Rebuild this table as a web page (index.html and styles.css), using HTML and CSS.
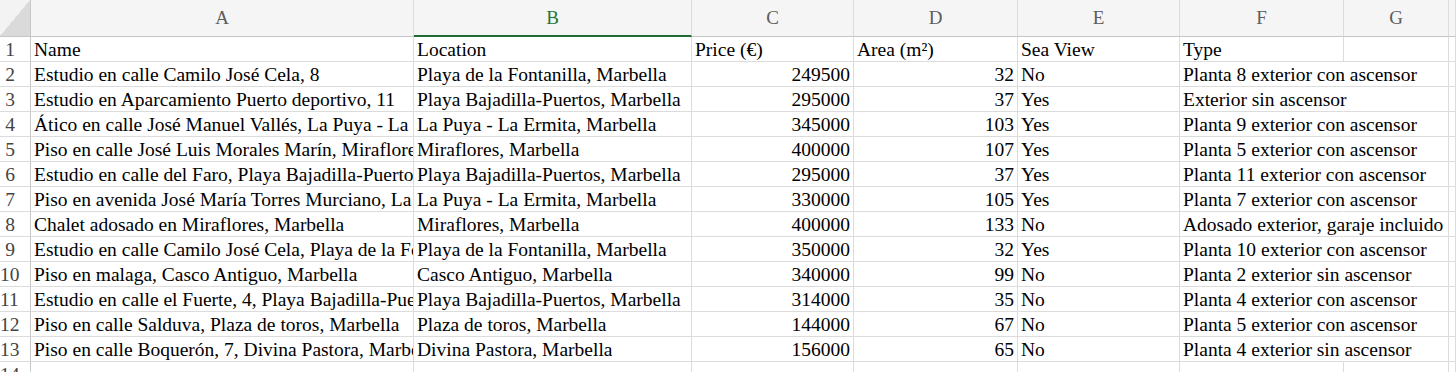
FILE: index.html
```html
<!DOCTYPE html>
<html lang="es">
<head>
<meta charset="utf-8">
<title>Sheet</title>
<link rel="stylesheet" href="styles.css">
</head>
<body>
<div class="sheet">
  <div class="hd corner"></div>
  <div class="hd col">A</div>
  <div class="hd col sel">B</div>
  <div class="hd col">C</div>
  <div class="hd col">D</div>
  <div class="hd col">E</div>
  <div class="hd col">F</div>
  <div class="hd col">G</div>
  <div class="hd col"></div>

  <div class="rn">1</div><div class="c clip">Name</div><div class="c clip">Location</div><div class="c">Price (€)</div><div class="c">Area (m²)</div><div class="c">Sea View</div><div class="c">Type</div><div class="c"></div><div class="c"></div>
  <div class="rn">2</div><div class="c clip">Estudio en calle Camilo José Cela, 8</div><div class="c clip">Playa de la Fontanilla, Marbella</div><div class="c num">249500</div><div class="c num">32</div><div class="c">No</div><div class="c over">Planta 8 exterior con ascensor</div><div class="c"></div><div class="c"></div>
  <div class="rn">3</div><div class="c clip">Estudio en Aparcamiento Puerto deportivo, 11</div><div class="c clip">Playa Bajadilla-Puertos, Marbella</div><div class="c num">295000</div><div class="c num">37</div><div class="c">Yes</div><div class="c over">Exterior sin ascensor</div><div class="c"></div><div class="c"></div>
  <div class="rn">4</div><div class="c clip">Ático en calle José Manuel Vallés, La Puya - La Ermita, Marbella</div><div class="c clip">La Puya - La Ermita, Marbella</div><div class="c num">345000</div><div class="c num">103</div><div class="c">Yes</div><div class="c over">Planta 9 exterior con ascensor</div><div class="c"></div><div class="c"></div>
  <div class="rn">5</div><div class="c clip">Piso en calle José Luis Morales Marín, Miraflores, Marbella</div><div class="c clip">Miraflores, Marbella</div><div class="c num">400000</div><div class="c num">107</div><div class="c">Yes</div><div class="c over">Planta 5 exterior con ascensor</div><div class="c"></div><div class="c"></div>
  <div class="rn">6</div><div class="c clip">Estudio en calle del Faro, Playa Bajadilla-Puertos, Marbella</div><div class="c clip">Playa Bajadilla-Puertos, Marbella</div><div class="c num">295000</div><div class="c num">37</div><div class="c">Yes</div><div class="c over">Planta 11 exterior con ascensor</div><div class="c"></div><div class="c"></div>
  <div class="rn">7</div><div class="c clip">Piso en avenida José María Torres Murciano, La Puya - La Ermita, Marbella</div><div class="c clip">La Puya - La Ermita, Marbella</div><div class="c num">330000</div><div class="c num">105</div><div class="c">Yes</div><div class="c over">Planta 7 exterior con ascensor</div><div class="c"></div><div class="c"></div>
  <div class="rn">8</div><div class="c clip">Chalet adosado en Miraflores, Marbella</div><div class="c clip">Miraflores, Marbella</div><div class="c num">400000</div><div class="c num">133</div><div class="c">No</div><div class="c over">Adosado exterior, garaje incluido</div><div class="c"></div><div class="c"></div>
  <div class="rn">9</div><div class="c clip">Estudio en calle Camilo José Cela, Playa de la Fontanilla, Marbella</div><div class="c clip">Playa de la Fontanilla, Marbella</div><div class="c num">350000</div><div class="c num">32</div><div class="c">Yes</div><div class="c over">Planta 10 exterior con ascensor</div><div class="c"></div><div class="c"></div>
  <div class="rn">10</div><div class="c clip">Piso en malaga, Casco Antiguo, Marbella</div><div class="c clip">Casco Antiguo, Marbella</div><div class="c num">340000</div><div class="c num">99</div><div class="c">No</div><div class="c over">Planta 2 exterior sin ascensor</div><div class="c"></div><div class="c"></div>
  <div class="rn">11</div><div class="c clip">Estudio en calle el Fuerte, 4, Playa Bajadilla-Puertos, Marbella</div><div class="c clip">Playa Bajadilla-Puertos, Marbella</div><div class="c num">314000</div><div class="c num">35</div><div class="c">No</div><div class="c over">Planta 4 exterior con ascensor</div><div class="c"></div><div class="c"></div>
  <div class="rn">12</div><div class="c clip">Piso en calle Salduva, Plaza de toros, Marbella</div><div class="c clip">Plaza de toros, Marbella</div><div class="c num">144000</div><div class="c num">67</div><div class="c">No</div><div class="c over">Planta 5 exterior con ascensor</div><div class="c"></div><div class="c"></div>
  <div class="rn">13</div><div class="c clip">Piso en calle Boquerón, 7, Divina Pastora, Marbella</div><div class="c clip">Divina Pastora, Marbella</div><div class="c num">156000</div><div class="c num">65</div><div class="c">No</div><div class="c over">Planta 4 exterior sin ascensor</div><div class="c"></div><div class="c"></div>
  <div class="rn">14</div><div class="c"></div><div class="c"></div><div class="c"></div><div class="c"></div><div class="c"></div><div class="c"></div><div class="c"></div><div class="c"></div>
</div>
</body>
</html>
```

FILE: styles.css
```css
html, body {
  margin: 0;
  padding: 0;
  background: #ffffff;
}

body {
  width: 1456px;
  height: 372px;
  overflow: hidden;
  font-family: "Liberation Serif", "Times New Roman", serif;
}

.sheet {
  display: grid;
  grid-template-columns: 31px 383px 278px 162px 164px 162px 164px 105px 1fr;
  grid-template-rows: 37px;
  grid-auto-rows: 25px;
  font-family: "Liberation Serif", "Times New Roman", serif;
  font-size: 19.5px;
  color: #000;
}

.sheet > div {
  box-sizing: border-box;
  white-space: nowrap;
}

.hd {
  background: #f5f5f5;
  border-bottom: 1px solid #c6c6c6;
  border-right: 1px solid #dcdcdc;
  color: #5e5e5e;
  font-size: 19px;
  text-align: center;
  line-height: 36px;
}

.corner {
  background: linear-gradient(to bottom right, #f3f3f3 50%, #dadada 50%);
  border-right-color: #c8c8c8;
}

.sel {
  color: #1f7a3a;
  border-bottom: 2px solid #1e6b36;
  line-height: 35px;
}

.rn {
  border-right: 1px solid #c8c8c8;
  border-bottom: 1px solid #dcdcdc;
  color: #444;
  text-align: right;
  padding-right: 15px;
  padding-top: 1px;
  line-height: 24px;
}

.c {
  border-right: 1px solid #dcdcdc;
  border-bottom: 1px solid #dcdcdc;
  padding: 1px 3px 0 3px;
  line-height: 24px;
}

.clip {
  overflow: hidden;
}

.num {
  text-align: right;
}

.over {
  border-right-color: transparent;
  overflow: visible;
}
```
